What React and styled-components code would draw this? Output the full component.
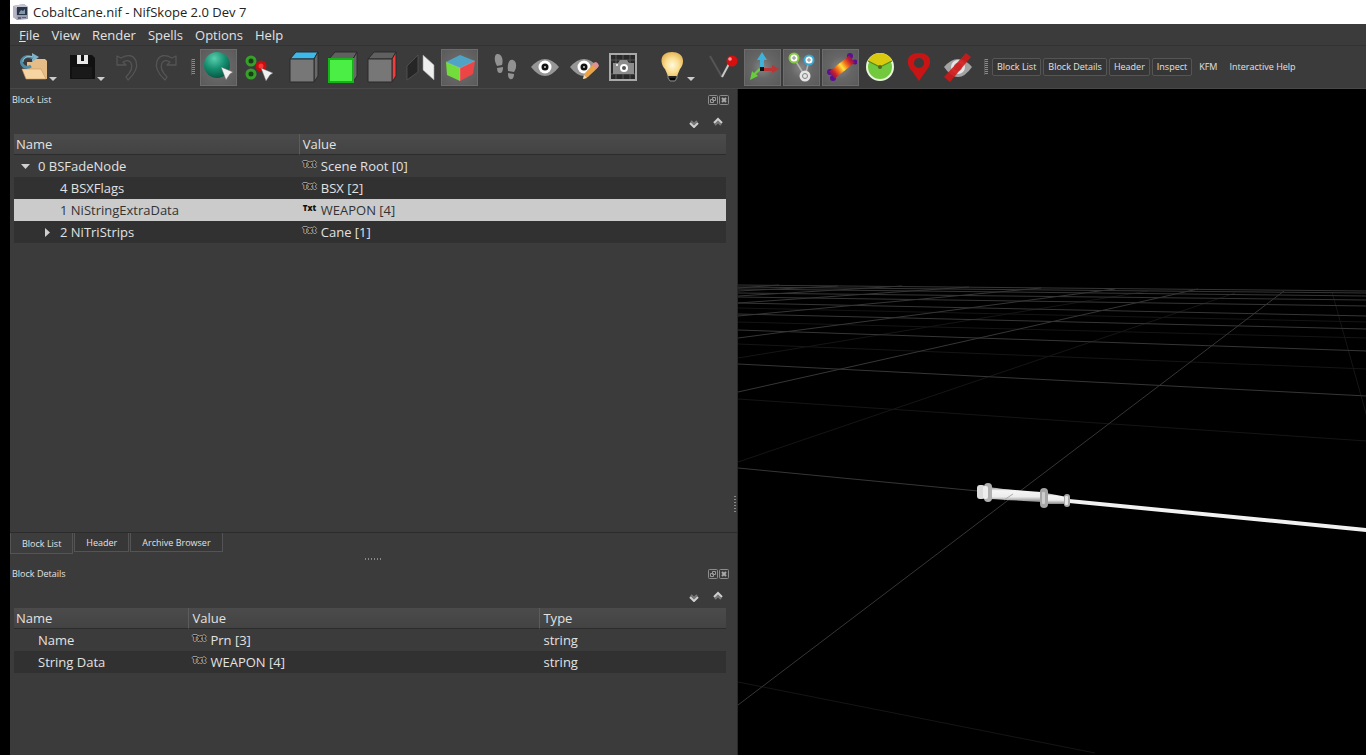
import React from "react";
import styled, { createGlobalStyle, css } from "styled-components";

const Global = createGlobalStyle`
  * { box-sizing: border-box; }
  body { margin: 0; background: #000; }
  body, button, table { font-family: "Open Sans", "Noto Sans", sans-serif; font-size: 13px; color: #e2e2e2; }
  button { border: 0; margin: 0; padding: 0; background: none; }
  svg { display: block; }
`;

const Window = styled.div`
  min-height: 100vh;
  margin-left: 10px;
  display: flex;
  flex-direction: column;
  background: #3b3b3b;
`;

const TitleBar = styled.header`
  height: 24px;
  display: flex;
  align-items: center;
  gap: 4px;
  padding-left: 2px;
  background: #fff;
`;

const Title = styled.h1`
  margin: 0;
  font-size: 13px;
  line-height: 24px;
  font-weight: 400;
  color: #222;
`;

const MenuBar = styled.nav`
  height: 22px;
  display: flex;
  padding: 1px 0 0 3px;
  border-bottom: 1px solid #323232;
`;

const MenuItem = styled.button`
  padding: 0 6px;
  line-height: 20px;
`;

const Toolbar = styled.div`
  height: 43px;
  display: flex;
  align-items: center;
  padding-left: 6px;
  border-bottom: 1px solid #484848;
`;

const ToolGroup = styled.div`
  display: flex;
  align-items: center;
  gap: ${(p) => p.$gap || 2}px;
  margin-left: ${(p) => p.$before || 0}px;
`;

const ToolButton = styled.button`
  width: 37px;
  height: 37px;
  display: flex;
  align-items: center;
  justify-content: center;
  ${(p) =>
    p.$active &&
    css`
      border: 1px solid #6c6c6c;
      background: radial-gradient(circle, #868686 0%, #666 45%, #5a5a5a 100%);
    `}
`;

const DropButton = styled.button`
  width: 42px;
  height: 37px;
  display: flex;
  align-items: center;
  justify-content: flex-start;
  padding-left: 3px;
`;

const Arrow = styled.span`
  margin-top: 24px;
  border: 4px solid transparent;
  border-top-color: #ccc;
  border-bottom: 0;
`;

const Handle = styled.span`
  width: 4px;
  height: 16px;
  margin-left: ${(p) => p.$before}px;
  background: repeating-linear-gradient(#8a8a8a 0 1px, transparent 1px 2px);
  border-left: 1px solid #5a5a5a;
`;

const TextButton = styled.button`
  height: 18px;
  padding: 0 4px;
  font-size: 9px;
  line-height: 16px;
  border: 1px solid ${(p) => (p.$checked ? "#555" : "transparent")};
  border-radius: 2px;
  background: ${(p) => (p.$checked ? "#363636" : "none")};
`;

const Body = styled.main`
  flex: 1;
  display: grid;
  grid-template-columns: minmax(0, 727fr) minmax(0, 629fr);
`;

const Docks = styled.div`
  position: relative;
  display: flex;
  flex-direction: column;
`;

const Dock = styled.section`
  flex: ${(p) => p.$share} 1 0;
  display: flex;
  flex-direction: column;
`;

const DockTitle = styled.div`
  height: 22px;
  display: flex;
  align-items: center;
  justify-content: space-between;
  padding: 0 8px 0 2px;
`;

const DockName = styled.h2`
  margin: 0;
  font-size: 9px;
  line-height: 14px;
  font-weight: 400;
`;

const DockButtons = styled.div`
  display: flex;
  gap: 1px;
`;

const ExpandBar = styled.div`
  height: 23px;
  display: flex;
  align-items: center;
  justify-content: flex-end;
  gap: 14px;
  padding-right: 14px;
`;

const Tree = styled.table`
  width: calc(100% - 15px);
  margin: 0 11px 0 4px;
  table-layout: fixed;
  border-collapse: separate;
  border-spacing: 0;
`;

const HeadCell = styled.th`
  height: 21px;
  width: ${(p) => p.$width};
  padding: 1px 0 0 ${(p) => (p.$first ? 2 : 3)}px;
  text-align: left;
  font-weight: 400;
  line-height: 19px;
  background: linear-gradient(#4b4b4b, #434343);
  border-left: ${(p) => (p.$first ? "0" : "1px solid #5c5c5c")};
  border-bottom: 1px solid #2c2c2c;
`;

const Row = styled.tr`
  background: ${(p) => (p.$selected ? "#cbcbcb" : p.$alt ? "#313131" : "transparent")};
  color: ${(p) => (p.$selected ? "#333" : "inherit")};
`;

const Cell = styled.td`
  height: 22px;
  padding: 0 0 0 4px;
  line-height: 22px;
  white-space: nowrap;
`;

const CellLine = styled.div`
  display: flex;
  align-items: center;
  padding-left: ${(p) => (p.$level || 0) * 22}px;
`;

const Expander = styled.button`
  width: 15px;
  height: 12px;
  margin-right: 5px;
  display: flex;
  align-items: center;
  justify-content: center;
`;

const Indent = styled.span`
  width: 20px;
`;

const TxtTag = styled.span`
  width: 18px;
  margin-top: -5px;
  font-size: 8px;
  line-height: 10px;
  font-weight: 800;
  color: ${(p) => (p.$selected ? "#111" : "#222")};
  text-shadow: ${(p) =>
    p.$selected ? "none" : "1px 0 0 #999, -1px 0 0 #999, 0 1px 0 #999, 0 -1px 0 #999"};
`;

const Tabs = styled.div`
  height: 31px;
  margin-top: auto;
  display: flex;
  align-items: flex-start;
  border-top: 1px solid #2b2b2b;
`;

const Tab = styled.button`
  height: ${(p) => (p.$active ? 21 : 19)}px;
  padding: ${(p) => (p.$active ? "2px 11px 0" : "1px 11px 0")};
  font-size: 9px;
  line-height: 18px;
  background: ${(p) => (p.$active ? "#3d3d3d" : "#373737")};
  border: 1px solid #545454;
  border-top: 0;
  & + & { margin-left: 1px; }
`;

const SplitDots = styled.span`
  position: absolute;
  ${(p) =>
    p.$vertical
      ? css`
          right: 1px;
          top: 407px;
          width: 2px;
          height: 16px;
          background: repeating-linear-gradient(#888 0 1px, transparent 1px 3px);
        `
      : css`
          left: calc(50% - 9px);
          bottom: 195px;
          width: 16px;
          height: 2px;
          background: repeating-linear-gradient(90deg, #888 0 1px, transparent 1px 3px);
        `}
`;

const Viewport = styled.div`
  position: relative;
  border-left: 1px solid #2a2a2a;
  background: #000;
`;

const Scene = styled.svg`
  position: absolute;
  width: 100%;
  height: 100%;
`;

const Icon = ({ size = 30, children }) => (
  <svg width={size} height={size} viewBox={`0 0 ${size} ${size}`} aria-hidden="true">
    {children}
  </svg>
);

const Cursor = ({ x, y }) => (
  <path transform={`translate(${x} ${y})`} d="M0 0L12 5L9 7L5 13Z" fill="#f0f0f0" stroke="#666" strokeWidth=".5" />
);

const AppIcon = () => (
  <svg width="17" height="18" viewBox="0 0 17 18" aria-hidden="true">
    <path d="M1 3L12 1L16 4L16 16L5 17L1 14Z" fill="#9a9ab0" />
    <path d="M1 3L12 1L16 4L4 5Z" fill="#c4c4d4" />
    <path d="M1 3L4 5L5 17L1 14Z" fill="#b4b4c6" />
    <rect x="5" y="4" width="10" height="8" fill="#29364a" />
    <path d="M7 10l2-3 2 1 2-2v5H7z" fill="#8397a8" />
    <path d="M6 14h3v2H6zM10 14h4v1h-4z" fill="#606078" />
  </svg>
);

const OpenIcon = () => (
  <Icon>
    <path d="M8 10h5l2-3h11l2 2v18H8z" fill="#e6bd86" />
    <path d="M3 17h19l5 10H7z" fill="#f7d5a2" stroke="#c79a62" strokeWidth=".6" />
    <path d="M13 1L20 5L13 10Z" fill="#7fb3c8" />
    <path d="M14 6C6 2 1 8 3 12c2 4 6 4 9 2" fill="none" stroke="#4f8ba5" strokeWidth="3" />
    <path d="M14 5C8 3 4 6 4 10" fill="none" stroke="#9dc8d8" strokeWidth="1" />
  </Icon>
);

const SaveIcon = () => (
  <Icon>
    <path d="M3 3h22l3 3v21H3z" fill="#111" />
    <path d="M10 3h11v9H10z" fill="#e8e8e8" />
    <path d="M14 3h3v6h-3z" fill="#111" />
    <path d="M5 15h20v11H5z" fill="#191919" />
  </Icon>
);

const UndoIcon = ({ flip }) => (
  <Icon>
    <path
      transform={flip ? "translate(30 0) scale(-1 1)" : undefined}
      d="M5 4v9h9l-3-3q6-3 8 1 3 6-5 14l2 3q11-10 8-19-4-9-15-3L5 4Z"
      fill="none"
      stroke="#555"
      strokeWidth="1.3"
      strokeLinejoin="round"
    />
  </Icon>
);

const SphereIcon = () => (
  <Icon size={32}>
    <defs>
      <radialGradient id="sphere" cx=".4" cy=".25" r=".8">
        <stop offset="0" stopColor="#58cfae" />
        <stop offset=".5" stopColor="#169072" />
        <stop offset="1" stopColor="#07523f" />
      </radialGradient>
    </defs>
    <circle cx="14" cy="14" r="13" fill="url(#sphere)" />
    <Cursor x="18" y="16" />
  </Icon>
);

const VertexSelectIcon = () => (
  <Icon>
    <g fill="#173f17" stroke="#38a02a" strokeWidth="3">
      <circle cx="8" cy="9" r="4" />
      <circle cx="8" cy="22" r="4" />
    </g>
    <circle cx="18" cy="14" r="4" fill="#f33" stroke="#c20f0f" strokeWidth="3" />
    <Cursor x="18" y="16" />
  </Icon>
);

const CubeIcon = ({ top = "#606060", front = "#777", side = "#686868", edge }) => (
  <Icon size={32}>
    <path d="M2 8L8 1H30L26 8Z" fill={top} stroke="#2a2a2a" />
    <path d="M26 8L30 1V25L26 31Z" fill={side} stroke="#2a2a2a" />
    <path d="M2 8H26V31H2Z" fill={front} stroke={edge || "#2a2a2a"} strokeWidth={edge ? 2 : 1} />
  </Icon>
);

const FlipIcon = () => (
  <Icon>
    <path d="M1 14L12 3V20L1 28Z" fill="#262626" stroke="#555" strokeWidth=".8" />
    <path d="M17 3L28 13V28L17 18Z" fill="#efefef" stroke="#999" strokeWidth=".6" />
  </Icon>
);

const ColorCubeIcon = () => (
  <Icon size={32}>
    <path d="M2 11L16 4L31 10L16 17Z" fill="#4fa3c4" />
    <path d="M2 11L16 17V30L3 24Z" fill="#72dc3d" />
    <path d="M16 17L31 10L29 23L16 30Z" fill="#ec4545" />
    <path d="M2 11L16 17L31 10M16 17V30" fill="none" stroke="#d5e3d5" strokeOpacity=".25" />
  </Icon>
);

const StepsIcon = () => (
  <Icon>
    <g fill="#929292">
      <path d="M6 2c4-1 7 5 5 11l-5 1C3 9 3 3 6 2ZM6 16l6-1c0 4-1 6-3 6s-3-2-3-5Z" />
      <path d="M22 8c-4-1-6 4-5 11l6 1c3-4 3-11-1-12ZM17 21l6 1c0 3-1 6-4 5-2-1-2-3-2-6Z" />
    </g>
  </Icon>
);

const Eye = () => (
  <>
    <path d="M1 15Q8 7 15 7Q22 7 29 15Q22 24 15 24Q8 24 1 15Z" fill="#969696" />
    <circle cx="15" cy="15" r="6.5" fill="#fff" />
    <circle cx="15" cy="15" r="3.5" fill="#111" />
    <circle cx="15" cy="15" r="1" fill="#ccc" />
  </>
);

const EyeIcon = () => (
  <Icon>
    <Eye />
  </Icon>
);

const EyeEditIcon = () => (
  <Icon>
    <Eye />
    <path d="M14 27l2-6L25 11l4 4-10 10z" fill="#eba345" />
    <path d="M23 13l3-3q3 0 4 4l-3 3z" fill="#e39090" />
    <path d="M14 27l1-4 3 3z" fill="#f0dcae" />
  </Icon>
);

const CameraIcon = () => (
  <Icon>
    <path d="M2 2H28V28H2Z" fill="#292929" stroke="#a9a9a9" strokeWidth="2" />
    <path d="M8 3V27M15 3V27M22 3V27M3 8H27M3 22H27" stroke="#575757" />
    <path d="M5 11h5l2-3h7l2 3h5v11H5z" fill="#8d8d8d" />
    <circle cx="16" cy="16" r="3" fill="#555" stroke="#fff" strokeWidth="2" />
    <circle cx="9" cy="13" r="1" fill="#fff" />
  </Icon>
);

const BulbIcon = () => (
  <Icon>
    <defs>
      <radialGradient id="bulb" cx=".5" cy=".55" r=".6">
        <stop offset="0" stopColor="#fff9e0" />
        <stop offset=".5" stopColor="#fbdf92" />
        <stop offset="1" stopColor="#e2b052" />
      </radialGradient>
    </defs>
    <path d="M11 22h9v4l-2 3h-5l-2-3z" fill="#222" stroke="#888" />
    <path d="M15 0C2 0 3 12 8 17l3 7h9l3-7C28 12 28 0 15 0Z" fill="url(#bulb)" />
    <path d="M13 27h5" stroke="#000" strokeWidth="2" />
  </Icon>
);

const VectorIcon = () => (
  <Icon size={32}>
    <path d="M2 5L14 26" stroke="#555" strokeWidth="2" />
    <path d="M14 26L22 11" stroke="#c8c8c8" strokeWidth="2" />
    <circle cx="24" cy="10" r="5.5" fill="#d80f0f" />
    <circle cx="22" cy="8" r="1.8" fill="#f99" />
  </Icon>
);

const AxesIcon = () => (
  <Icon size={32}>
    <path d="M15 1L20 9H17V16H13V9H10Z" fill="#3fb2da" />
    <path d="M16 17H25V14L32 18L25 22V20H16Z" fill="#bd3434" />
    <path d="M14 19L9 23L11 25L3 29L5 20L7 22L12 17Z" fill="#67ce3b" />
    <path d="M13 16h4v4h-4z" fill="#111" />
  </Icon>
);

const NodesIcon = () => (
  <Icon size={32}>
    <path d="M9 9L19 25M23 10L19 25" stroke="#b4b4b4" strokeWidth="1.5" />
    <g fill="#fff">
      <circle cx="8" cy="7" r="5.500" fill="#83c83f" />
      <circle cx="8" cy="7" r="3.500" />
      <circle cx="23" cy="9" r="5.500" fill="#37a8d4" />
      <circle cx="23" cy="9" r="3.500" />
      <circle cx="19" cy="25" r="5.500" fill="#e4e4e4" />
    </g>
    <g fill="none" stroke="#808080" strokeWidth="1">
      <circle cx="8" cy="7" r="1.200" />
      <circle cx="23" cy="9" r="1.200" />
      <circle cx="19" cy="25" r="2.500" />
    </g>
  </Icon>
);

const BoneIcon = () => (
  <Icon size={32}>
    <defs>
      <linearGradient id="heat" gradientUnits="userSpaceOnUse" x1="4" y1="26" x2="30" y2="6">
        <stop offset="0" stopColor="#5a0c8c" />
        <stop offset=".2" stopColor="#c01c30" />
        <stop offset=".35" stopColor="#f0701a" />
        <stop offset=".5" stopColor="#ffe23c" />
        <stop offset=".65" stopColor="#f0701a" />
        <stop offset=".8" stopColor="#c01c30" />
        <stop offset="1" stopColor="#5a0c8c" />
      </linearGradient>
    </defs>
    <g fill="#5a1090">
      <circle cx="5" cy="21" r="3" />
      <circle cx="8" cy="27" r="3" />
      <circle cx="25" cy="5" r="3" />
      <circle cx="30" cy="11" r="2.500" />
    </g>
    <path d="M7 24L27 8" stroke="url(#heat)" strokeWidth="9" />
  </Icon>
);

const AngleIcon = () => (
  <Icon size={30}>
    <circle cx="15" cy="15" r="13" fill="#73c93d" stroke="#e8f6dc" strokeWidth="2" />
    <path d="M15 15L3 9A13 13 0 0 1 27 9Z" fill="#d9c90f" />
    <path d="M3 9L15 15L27 9" fill="none" stroke="#4c8c22" strokeWidth="1.2" />
    <circle cx="15" cy="15" r="2" fill="#4e6a18" />
  </Icon>
);

const PinIcon = () => (
  <Icon>
    <path fillRule="evenodd" d="M15 1C1 1 2 13 8 19L15 29L22 19C28 13 29 1 15 1ZM15 6A5 5 0 1 1 15 16A5 5 0 1 1 15 6Z" fill="#c81414" />
  </Icon>
);

const EyeOffIcon = () => (
  <Icon size={32}>
    <path d="M2 16Q9 8 16 8Q23 8 30 16Q23 26 16 26Q9 26 2 16Z" fill="#a3a3a3" />
    <circle cx="16" cy="16" r="7" fill="#e5e5e5" />
    <circle cx="16" cy="16" r="4" fill="#999" />
    <path d="M2 26L24 2L29 6L8 31Z" fill="#d01818" fillOpacity=".9" />
  </Icon>
);

const FloatIcon = () => (
  <Icon size={10}>
    <rect x=".5" y=".5" width="9" height="9" rx="1" fill="none" stroke="#8c8c8c" />
    <path d="M4.500 2.500h3v3h-3zM2.500 4.500h3v3h-3z" fill="none" stroke="#999" />
  </Icon>
);

const CloseIcon = () => (
  <Icon size={10}>
    <rect x=".5" y=".5" width="9" height="9" rx="1" fill="none" stroke="#8c8c8c" />
    <path d="M3 3L7 7M7 3L3 7" stroke="#a8a8a8" strokeWidth="2" />
  </Icon>
);

const Chevrons = ({ up }) => (
  <svg width="10" height="11" viewBox="0 0 10 11" aria-hidden="true">
    <g transform={up ? "translate(0 10) scale(1 -1)" : "translate(0 2)"} fill="none" strokeWidth="2">
      <path d="M2 2L5 5L8 2" stroke="#777" />
      <path d="M1 4L5 8L9 4" stroke="#d0d0d0" />
    </g>
  </svg>
);

const TreeArrow = ({ open }) => (
  <svg width="9" height="9" viewBox="0 0 9 9" aria-hidden="true">
    <path d={open ? "M0 2H9L4.500 7Z" : "M2 0V9L7 4.500Z"} fill="#d0d0d0" />
  </svg>
);

const Tools = ({ items, before }) => (
  <ToolGroup $before={before}>
    {items.map(([label, icon, active]) => (
      <ToolButton key={label} aria-label={label} $active={active}>
        {icon}
      </ToolButton>
    ))}
  </ToolGroup>
);

const DropTool = ({ label, children }) => (
  <DropButton aria-label={label}>
    {children}
    <Arrow />
  </DropButton>
);

const undoTools = [
  ["Undo", <UndoIcon />],
  ["Redo", <UndoIcon flip />],
];
const selectTools = [
  ["Select object", <SphereIcon />, true],
  ["Select vertex", <VertexSelectIcon />],
];
const viewTools = [
  ["View top", <CubeIcon top="#3cb8ea" />],
  ["View front", <CubeIcon front="#4bee45" edge="#18b31a" />],
  ["View side", <CubeIcon side="#f33d3d" />],
  ["Flip view", <FlipIcon />],
  ["Perspective", <ColorCubeIcon />, true],
];
const cameraTools = [
  ["Walk", <StepsIcon />],
  ["Show view", <EyeIcon />],
  ["Edit view", <EyeEditIcon />],
  ["Screenshot", <CameraIcon />],
];
const sceneTools = [
  ["Vectors", <VectorIcon />],
  ["Axes", <AxesIcon />, true],
  ["Nodes", <NodesIcon />, true],
  ["Skinning", <BoneIcon />, true],
  ["Constraints", <AngleIcon />],
  ["Markers", <PinIcon />],
  ["Show hidden", <EyeOffIcon />],
];

const DockHeader = ({ name }) => (
  <>
    <DockTitle>
      <DockName>{name}</DockName>
      <DockButtons>
        <button aria-label={`Float ${name}`}><FloatIcon /></button>
        <button aria-label={`Close ${name}`}><CloseIcon /></button>
      </DockButtons>
    </DockTitle>
    <ExpandBar>
      <button aria-label="Expand all"><Chevrons /></button>
      <button aria-label="Collapse all"><Chevrons up /></button>
    </ExpandBar>
  </>
);

const TxtValue = ({ selected, children }) => (
  <CellLine>
    <TxtTag $selected={selected}>Txt</TxtTag>
    {children}
  </CellLine>
);

const blocks = [
  { name: "0 BSFadeNode", value: "Scene Root [0]", level: 0, open: true },
  { name: "4 BSXFlags", value: "BSX [2]", level: 1 },
  { name: "1 NiStringExtraData", value: "WEAPON [4]", level: 1, selected: true },
  { name: "2 NiTriStrips", value: "Cane [1]", level: 1, open: false },
];

const details = [
  ["Name", "Prn [3]", "string"],
  ["String Data", "WEAPON [4]", "string"],
];

const brightLines = [
  [546, 202, 0, 616], [460, 200, 0, 303], [377, 200, 0, 249], [303, 199, 0, 227],
  [231, 198, 0, 214], [164, 197, 0, 207], [100, 197, 0, 202], [41, 196, 0, 199],
  [0, 379, 240, 402], [0, 275, 629, 307], [0, 241, 629, 262], [0, 225, 629, 240],
  [0, 214, 629, 227], [0, 208, 629, 217], [0, 204, 629, 211], [0, 200, 629, 207],
  [0, 198, 629, 204], [0, 196, 629, 202],
];
const faintLines = [
  [0, 310, 629, 352], [0, 255, 629, 280], [0, 233, 629, 249], [0, 373, 497, 204],
  [0, 269, 410, 202], [594, 203, 629, 328], [0, 593, 357, 664], [0, 219, 629, 233],
];

const GridLines = ({ lines, color }) => (
  <g stroke={color}>
    {lines.map(([x1, y1, x2, y2], i) => (
      <line key={i} x1={x1} y1={y1} x2={x2} y2={y2} />
    ))}
  </g>
);

const CaneScene = () => (
  <Scene viewBox="0 0 629 666" preserveAspectRatio="xMinYMin slice" role="img" aria-label="Cane model">
    <defs>
      <linearGradient id="metal" x1="0" y1="0" x2="0" y2="1">
        <stop offset="0" stopColor="#8f8f8f" />
        <stop offset=".25" stopColor="#f5f5f5" />
        <stop offset=".65" stopColor="#ececec" />
        <stop offset="1" stopColor="#858585" />
      </linearGradient>
    </defs>
    <GridLines lines={faintLines} color="#151515" />
    <GridLines lines={brightLines} color="#363636" />
    <path d="M331 410L629 439V443L331 414Z" fill="#f2f2f2" />
    <path d="M252 398Q260 400 303 403V413Q270 411 252 410Z" fill="url(#metal)" />
    <path d="M308 404L329 408V415L308 415Z" fill="url(#metal)" />
    <rect x="239" y="396" width="8" height="14" rx="3" fill="#dcdcdc" />
    <rect x="246" y="394" width="8" height="19" rx="4" fill="#b0b0b0" />
    <rect x="245" y="397" width="5" height="13" rx="2" fill="#eee" />
    <rect x="302" y="399" width="8" height="20" rx="4" fill="#a5a5a5" />
    <rect x="304" y="403" width="3" height="12" rx="1" fill="#cdcdcd" />
    <rect x="326" y="405" width="6" height="13" rx="3" fill="#a8a8a8" />
    <rect x="327" y="407" width="3" height="9" rx="1" fill="#e5e5e5" />
    <path d="M266 411L275 405" stroke="#aaa" />
  </Scene>
);

export default function App() {
  return (
    <>
      <Global />
      <Window>
        <TitleBar>
          <AppIcon />
          <Title>CobaltCane.nif - NifSkope 2.0 Dev 7</Title>
        </TitleBar>
        <MenuBar>
          <MenuItem><u>F</u>ile</MenuItem>
          {["View", "Render", "Spells", "Options", "Help"].map((m) => (
            <MenuItem key={m}>{m}</MenuItem>
          ))}
        </MenuBar>
        <Toolbar>
          <ToolGroup $gap={6}>
            <DropTool label="Open"><OpenIcon /></DropTool>
            <DropTool label="Save"><SaveIcon /></DropTool>
          </ToolGroup>
          <Tools items={undoTools} before={2} />
          <Handle $before={7} />
          <Tools items={selectTools} before={5} />
          <Tools items={viewTools} before={9} />
          <Tools items={cameraTools} before={9} />
          <ToolGroup $before={13}>
            <DropTool label="Lighting"><BulbIcon /></DropTool>
          </ToolGroup>
          <Tools items={sceneTools} before={9} />
          <Handle $before={8} />
          <ToolGroup $before={4}>
            {["Block List", "Block Details", "Header", "Inspect"].map((t) => (
              <TextButton key={t} $checked>{t}</TextButton>
            ))}
            <TextButton>KFM</TextButton>
            <TextButton>Interactive Help</TextButton>
          </ToolGroup>
        </Toolbar>
        <Body>
          <Docks>
            <Dock $share={474}>
              <DockHeader name="Block List" />
              <Tree>
                <thead>
                  <tr>
                    <HeadCell $first $width="40%">Name</HeadCell>
                    <HeadCell>Value</HeadCell>
                  </tr>
                </thead>
                <tbody>
                  {blocks.map((b, i) => (
                    <Row key={b.name} $selected={b.selected} $alt={i % 2 === 1}>
                      <Cell>
                        <CellLine $level={b.level}>
                          {b.open === undefined ? (
                            <Indent />
                          ) : (
                            <Expander aria-label={`Toggle ${b.name}`} aria-expanded={b.open}>
                              <TreeArrow open={b.open} />
                            </Expander>
                          )}
                          {b.name}
                        </CellLine>
                      </Cell>
                      <Cell>
                        <TxtValue selected={b.selected}>{b.value}</TxtValue>
                      </Cell>
                    </Row>
                  ))}
                </tbody>
              </Tree>
              <Tabs>
                <Tab $active>Block List</Tab>
                <Tab>Header</Tab>
                <Tab>Archive Browser</Tab>
              </Tabs>
            </Dock>
            <Dock $share={192}>
              <DockHeader name="Block Details" />
              <Tree>
                <thead>
                  <tr>
                    <HeadCell $first $width="24.5%">Name</HeadCell>
                    <HeadCell $width="49.3%">Value</HeadCell>
                    <HeadCell>Type</HeadCell>
                  </tr>
                </thead>
                <tbody>
                  {details.map(([name, value, type], i) => (
                    <Row key={name} $alt={i % 2 === 1}>
                      <Cell>
                        <CellLine><Indent />{name}</CellLine>
                      </Cell>
                      <Cell>
                        <TxtValue>{value}</TxtValue>
                      </Cell>
                      <Cell>{type}</Cell>
                    </Row>
                  ))}
                </tbody>
              </Tree>
            </Dock>
            <SplitDots />
            <SplitDots $vertical />
          </Docks>
          <Viewport>
            <CaneScene />
          </Viewport>
        </Body>
      </Window>
    </>
  );
}
